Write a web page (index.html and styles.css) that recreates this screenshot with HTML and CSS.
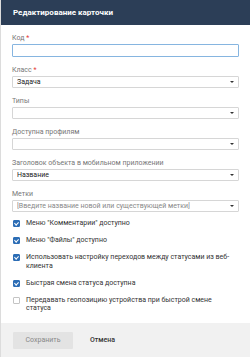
FILE: index.html
```html
<!DOCTYPE html>
<html lang="ru">
<head>
<meta charset="utf-8">
<link rel="stylesheet" href="styles.css">
</head>
<body>
<div class="dialog">
  <div class="header">Редактирование карточки</div>
  <div class="content">
    <div class="field">
      <div class="label">Код <span class="req">*</span></div>
      <div class="control input focused"></div>
    </div>
    <div class="field">
      <div class="label">Класс <span class="req">*</span></div>
      <div class="control select"><span class="value">Задача</span><span class="arrow"></span></div>
    </div>
    <div class="field">
      <div class="label">Типы</div>
      <div class="control select"><span class="value"></span><span class="arrow"></span></div>
    </div>
    <div class="field">
      <div class="label">Доступна профилям</div>
      <div class="control select"><span class="value"></span><span class="arrow"></span></div>
    </div>
    <div class="field">
      <div class="label">Заголовок объекта в мобильном приложении</div>
      <div class="control select"><span class="value">Название</span><span class="arrow"></span></div>
    </div>
    <div class="field">
      <div class="label">Метки</div>
      <div class="control select"><span class="value placeholder">[Введите название новой или существующей метки]</span><span class="arrow"></span></div>
    </div>
    <div class="checks">
      <div class="check"><span class="box on"></span><span class="text">Меню "Комментарии" доступно</span></div>
      <div class="check"><span class="box on"></span><span class="text">Меню "Файлы" доступно</span></div>
      <div class="check"><span class="box on"></span><span class="text">Использовать настройку переходов между статусами из веб-клиента</span></div>
      <div class="check"><span class="box on"></span><span class="text">Быстрая смена статуса доступна</span></div>
      <div class="check"><span class="box"></span><span class="text">Передавать геопозицию устройства при быстрой смене статуса</span></div>
    </div>
  </div>
  <div class="footer">
    <button class="btn save">Сохранить</button>
    <button class="btn cancel">Отмена</button>
  </div>
</div>
</body>
</html>
```
FILE: styles.css
```css
* { box-sizing: border-box; }
html, body { margin: 0; padding: 0; }
body {
  font-family: Roboto, "Noto Sans", sans-serif;
  background: #fff;
  width: 250px;
  height: 357px;
  overflow: hidden;
}
.dialog {
  display: flex;
  flex-direction: column;
  height: 357px;
  border-left: 1px solid #dcdcdc;
}
.header {
  height: 25px;
  background: #2c3e57;
  color: #fff;
  font-weight: 700;
  font-size: 8px;
  line-height: 25px;
  padding-left: 12px;
  flex: none;
}
.content {
  flex: 1;
  padding: 8px 11px 0 11px;
}
.field { margin-bottom: 8px; }
.label {
  font-size: 7px;
  line-height: 10px;
  color: #777;
  margin-bottom: 1px;
}
.req { color: #e53935; }
.control {
  height: 12px;
  border: 1px solid #d6d6d6;
  border-radius: 1px;
  background: #fff;
  display: flex;
  align-items: center;
  padding: 0 3px 0 4px;
}
.control.focused { border-color: #86b5e0; height: 13px; }
.value {
  flex: 1;
  font-size: 7px;
  color: #222;
  white-space: nowrap;
  overflow: hidden;
}
.value.placeholder { color: #888; }
.arrow {
  width: 0; height: 0;
  border-left: 2px solid transparent;
  border-right: 2px solid transparent;
  border-top: 2.5px solid #333;
  margin-right: 1px;
}
.checks {
  display: flex;
  flex-direction: column;
  gap: 8.5px;
  margin-top: -1px;
}
.check {
  display: flex;
  align-items: flex-start;
  font-size: 7px;
  line-height: 8.5px;
  color: #333;
}
.box {
  flex: none;
  width: 7px;
  height: 7px;
  margin: 1px 6px 0 1px;
  border: 1px solid #c4c4c4;
  border-radius: 1px;
  background: #fff;
  position: relative;
}
.box.on { background: #2c6db5; border-color: #2c6db5; }
.box.on::after {
  content: "";
  position: absolute;
  left: 1.4px; top: 0.2px;
  width: 1.6px; height: 3.2px;
  border-right: 1px solid #fff;
  border-bottom: 1px solid #fff;
  transform: rotate(45deg);
}
.text { padding-right: 4px; }
.footer {
  flex: none;
  height: 34px;
  background: #f1f1f1;
  display: flex;
  align-items: center;
  padding-left: 12px;
  gap: 5px;
}
.btn {
  font-family: Roboto, "Noto Sans", sans-serif;
  font-size: 7px;
  height: 17px;
  border: none;
  border-radius: 1px;
  padding: 0 12px;
  background: transparent;
}
.save { background: #e3e3e3; color: #888; width: 60px; padding: 0; }
.cancel { color: #333; font-weight: 500; }
```
